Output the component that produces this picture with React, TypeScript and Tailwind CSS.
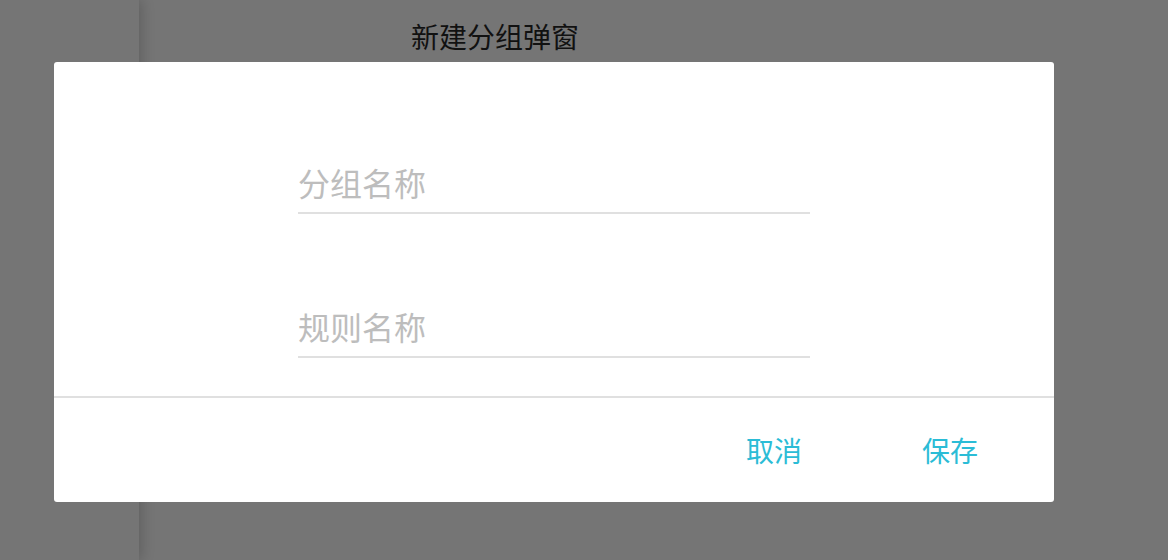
import React from "react";

const cjk = { fontFamily: '"Noto Sans CJK SC", "Noto Sans", sans-serif' };

function Field({ placeholder }: { placeholder: string }) {
  return (
    <input
      type="text"
      placeholder={placeholder}
      style={cjk}
      className="block h-[48px] w-[512px] border-0 border-b-2 border-[#e0e0e0] bg-transparent p-0 pb-[14px] text-[32px] leading-[32px] text-[#333] outline-none placeholder:text-[#bdbdbd]"
    />
  );
}

export default function App() {
  return (
    <div className="relative h-[560px] w-full overflow-hidden bg-[#757575]" style={cjk}>
      <div className="flex h-full">
        <aside className="h-full w-[139px] bg-[#757575] shadow-[3px_0_12px_rgba(0,0,0,0.18)]" />
        <main className="flex-1" />
      </div>

      <div className="absolute inset-0 flex flex-col pl-[54px] pt-[22px]">
        <h1 className="ml-[357px] text-[28px] leading-[28px] font-normal text-[#111]">
          新建分组弹窗
        </h1>
        <div className="mt-[12px] w-[1000px] rounded-[3px] bg-white">
          <div className="flex flex-col items-center gap-[96px] pt-[104px] pb-[38px]">
            <Field placeholder="分组名称" />
            <Field placeholder="规则名称" />
          </div>
          <div className="h-[2px] bg-[#e0e0e0]" />
          <div className="flex h-[104px] items-center justify-end gap-[120px] pr-[76px]">
            <button className="text-[28px] leading-[28px] text-[#2bbcd6]">取消</button>
            <button className="text-[28px] leading-[28px] text-[#2bbcd6]">保存</button>
          </div>
        </div>
      </div>
    </div>
  );
}
